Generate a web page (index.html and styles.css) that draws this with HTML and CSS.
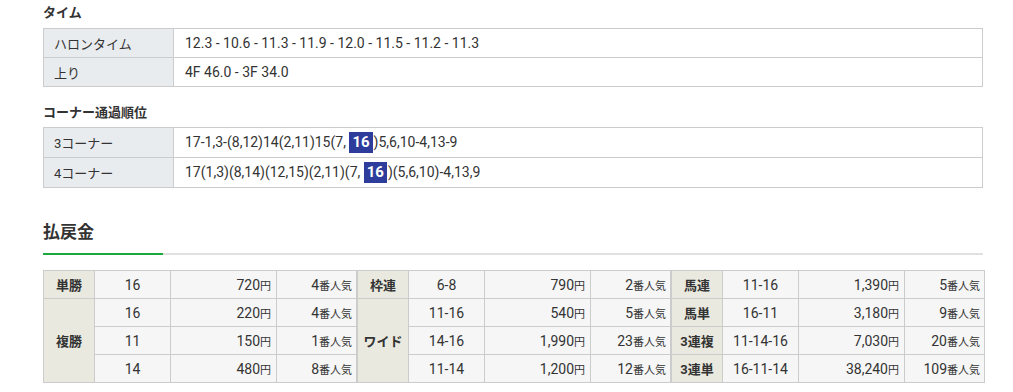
FILE: index.html
```html
<!DOCTYPE html>
<html lang="ja">
<head>
<meta charset="utf-8">
<link rel="stylesheet" href="styles.css">
</head>
<body>
<div class="page">
  <h3 class="sub-title">タイム</h3>
  <table class="info-table">
    <tr><th>ハロンタイム</th><td>12.3 - 10.6 - 11.3 - 11.9 - 12.0 - 11.5 - 11.2 - 11.3</td></tr>
    <tr><th>上り</th><td>4F 46.0 - 3F 34.0</td></tr>
  </table>

  <h3 class="sub-title corner-title">コーナー通過順位</h3>
  <table class="info-table corner-table">
    <tr><th>3コーナー</th><td>17-1,3-(8,12)14(2,11)15(7, <span class="badge">16</span>)5,6,10-4,13-9</td></tr>
    <tr><th>4コーナー</th><td>17(1,3)(8,14)(12,15)(2,11)(7, <span class="badge">16</span>)(5,6,10)-4,13,9</td></tr>
  </table>

  <div class="pay-head">
    <h2 class="pay-title">払戻金</h2>
  </div>

  <div class="pay-wrap">
    <table class="pay-table">
      <colgroup><col class="c-lab"><col class="c-num"><col class="c-amt"><col class="c-pop"></colgroup>
      <tr><th>単勝</th><td class="num">16</td><td class="amt">720<small>円</small></td><td class="pop">4<small>番人気</small></td></tr>
      <tr><th rowspan="3">複勝</th><td class="num">16</td><td class="amt">220<small>円</small></td><td class="pop">4<small>番人気</small></td></tr>
      <tr class="dash"><td class="num">11</td><td class="amt">150<small>円</small></td><td class="pop">1<small>番人気</small></td></tr>
      <tr class="dash"><td class="num">14</td><td class="amt">480<small>円</small></td><td class="pop">8<small>番人気</small></td></tr>
    </table>
    <table class="pay-table">
      <colgroup><col class="c-lab"><col class="c-num"><col class="c-amt"><col class="c-pop"></colgroup>
      <tr><th>枠連</th><td class="num">6-8</td><td class="amt">790<small>円</small></td><td class="pop">2<small>番人気</small></td></tr>
      <tr><th rowspan="3">ワイド</th><td class="num">11-16</td><td class="amt">540<small>円</small></td><td class="pop">5<small>番人気</small></td></tr>
      <tr class="dash"><td class="num">14-16</td><td class="amt">1,990<small>円</small></td><td class="pop">23<small>番人気</small></td></tr>
      <tr class="dash"><td class="num">11-14</td><td class="amt">1,200<small>円</small></td><td class="pop">12<small>番人気</small></td></tr>
    </table>
    <table class="pay-table">
      <colgroup><col class="c-lab"><col class="c-num"><col class="c-amt"><col class="c-pop"></colgroup>
      <tr><th>馬連</th><td class="num">11-16</td><td class="amt">1,390<small>円</small></td><td class="pop">5<small>番人気</small></td></tr>
      <tr><th>馬単</th><td class="num">16-11</td><td class="amt">3,180<small>円</small></td><td class="pop">9<small>番人気</small></td></tr>
      <tr><th>3連複</th><td class="num">11-14-16</td><td class="amt">7,030<small>円</small></td><td class="pop">20<small>番人気</small></td></tr>
      <tr><th>3連単</th><td class="num">16-11-14</td><td class="amt">38,240<small>円</small></td><td class="pop">109<small>番人気</small></td></tr>
    </table>
  </div>
</div>
</body>
</html>
```

FILE: styles.css
```css
* { box-sizing: border-box; }
body {
  margin: 0;
  background: #fff;
  color: #333;
  font-family: Roboto, "Noto Sans CJK JP", sans-serif;
  font-size: 13px;
}
.page {
  width: 940px;
  margin-left: 43px;
  padding-top: 4px;
}
.sub-title {
  margin: 0 0 7px 0;
  font-size: 13px;
  font-weight: bold;
  line-height: 17px;
}
.corner-title { margin-top: 17px; margin-bottom: 6px; }
.info-table {
  width: 100%;
  border-collapse: collapse;
  table-layout: fixed;
}
.info-table th, .info-table td {
  border: 1px solid #ccc;
  height: 29px;
  padding: 0 10px;
  text-align: left;
  font-weight: normal;
  vertical-align: middle;
}
.info-table th {
  width: 130px;
  background: #e9ecef;
  font-size: 13px;
}
.info-table td { padding-left: 11px; font-size: 14px; }
.corner-table th, .corner-table td { height: 30px; }
.badge {
  display: inline-block;
  background: #2e3d9c;
  color: #fff;
  font-weight: bold;
  font-size: 15px;
  line-height: 21px;
  padding: 0 3px;
  margin-right: 1px;
}
.pay-head {
  margin-top: 32px;
  border-bottom: 2px solid #e0e0e0;
}
.pay-title {
  margin: 0;
  font-size: 17px;
  font-weight: bold;
  line-height: 24px;
  padding-bottom: 9px;
  width: 120px;
  border-bottom: 2px solid #1aa93a;
  margin-bottom: -2px;
}
.pay-wrap {
  display: flex;
  margin-top: 15px;
}
.pay-table {
  flex: 0 0 313px;
  width: 313px;
  border-collapse: collapse;
  table-layout: fixed;
  border: 1px solid #ccc;
}
.c-lab { width: 51px; }
.c-num { width: 76px; }
.c-amt { width: 106px; }
.c-pop { width: 80px; }
.pay-table th, .pay-table td {
  border: 1px solid #ccc;
  height: 28px;
  padding: 0 5px;
  vertical-align: middle;
  white-space: nowrap;
}
.pay-table th {
  background: #e9e9df;
  font-weight: bold;
  text-align: center;
}
.pay-table td { background: #f6f6f6; font-size: 14px; }
.pay-table td.num { text-align: center; }
.pay-table td.amt { text-align: right; padding-right: 5px; }
.pay-table td.pop { text-align: right; padding-right: 4px; }
.pay-table small { font-size: 11px; }
.pay-table tr.dash td { border-top: 1px dashed #ccc; }
```
